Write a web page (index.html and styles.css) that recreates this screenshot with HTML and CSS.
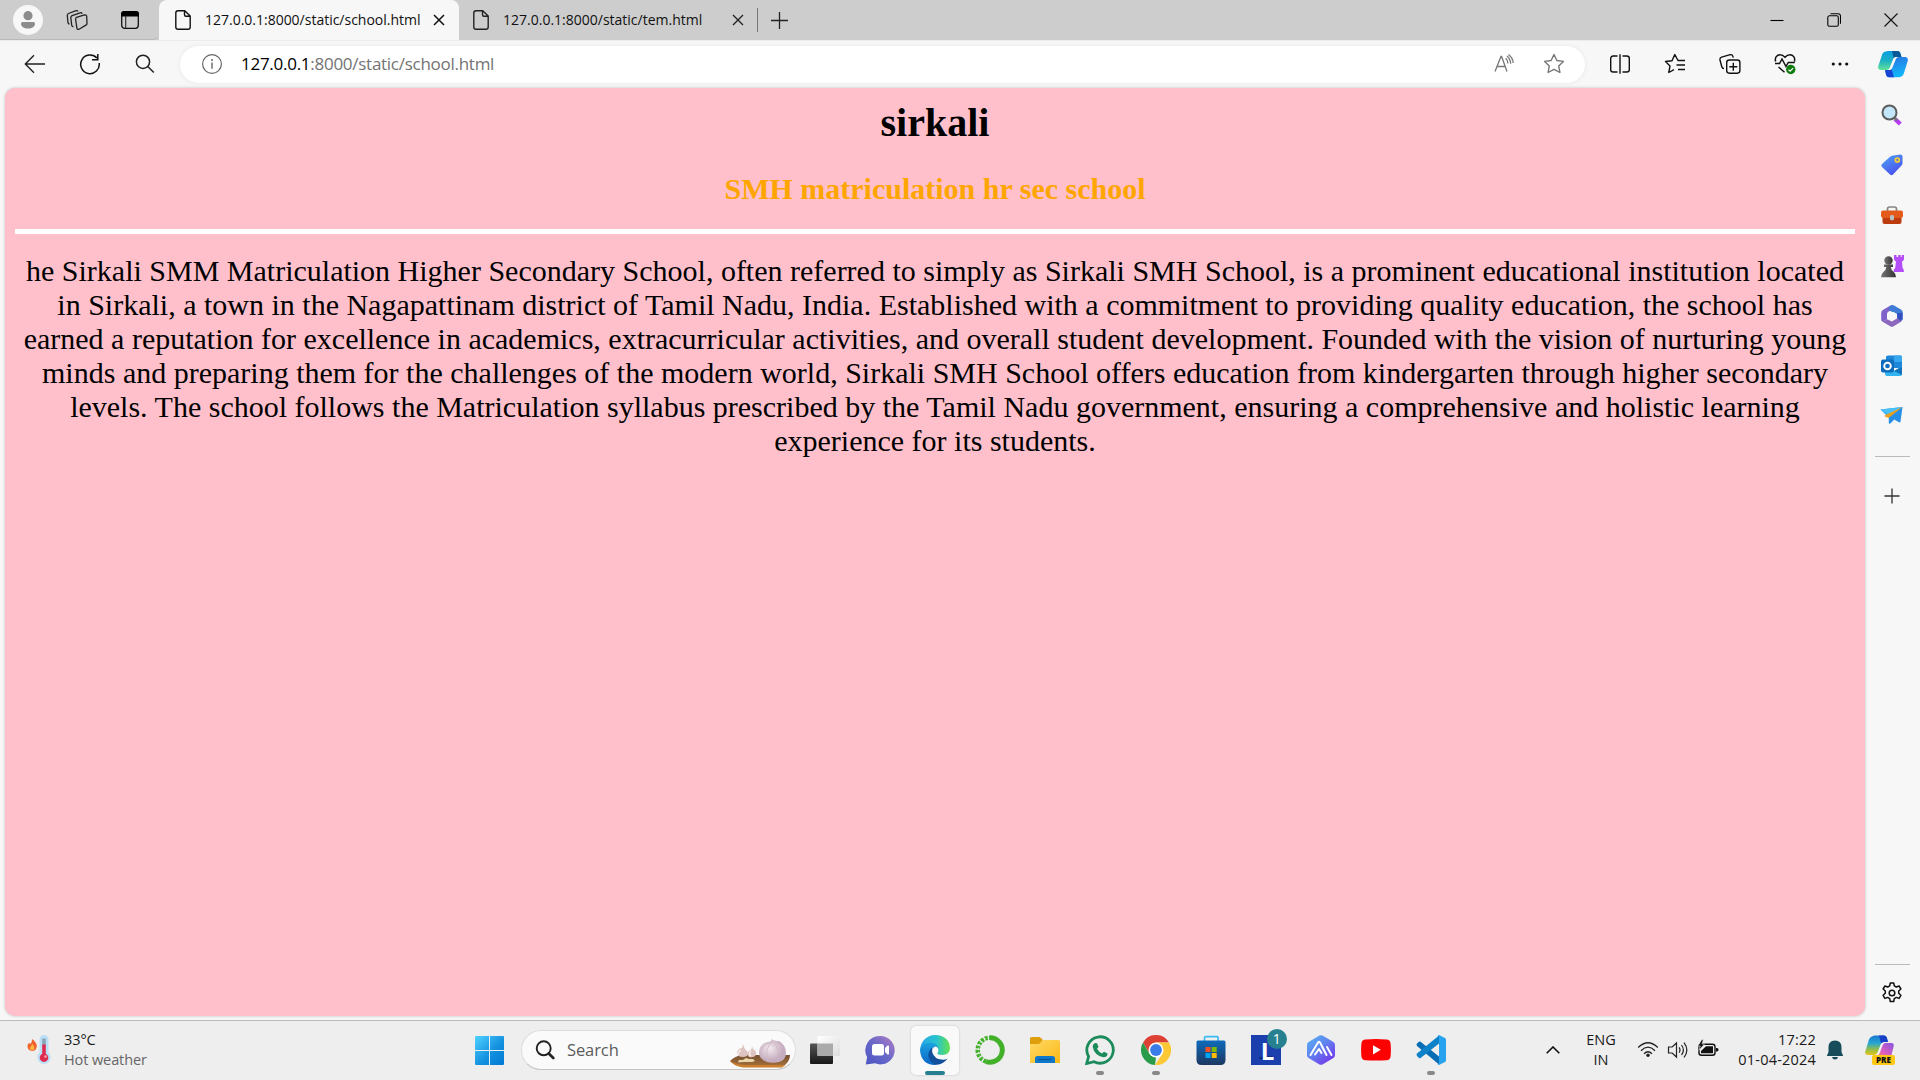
FILE: index.html
```html
<!DOCTYPE html>
<html lang="en">
<head>
<meta charset="utf-8">
<title>127.0.0.1:8000/static/school.html</title>
<link rel="stylesheet" href="styles.css">
</head>
<body>
<header class="tabbar">
  <div class="tab-tools">
    <svg class="i30" viewBox="0 0 30 30"><circle cx="15" cy="15" r="15" fill="#f7f7f7"/><circle cx="15" cy="10.7" r="4.6" fill="#8c8c8c"/><path d="M9.5 17h11q1.5 0 1.500 1.500c0 3.500-3 5-7 5s-7-1.500-7-5q0-1.500 1.500-1.500z" fill="#8c8c8c"/></svg>
    <svg class="i22 ws" viewBox="0 0 22 22" fill="none" stroke="#222" stroke-width="1.300"><path d="M10.500 8.300l8-2.300q1.800-.4 2.200 1.200l.3 7.300q0 1.200-1.200 1.700l-6.700 4q-2 .8-2.200-1l-1.300-8.700q0-1.700.9-2.200zM7.500 17.500q-1.500.3-1.800-1.300l-.9-7.500q0-1.600 1.300-2.100l8-2.800q1.500-.4 2.100 1M3.500 15q-1.300 0-1.500-1.300L1.300 6.600Q1.300 5 2.500 4.500l7.500-2.800q1.300-.4 2 .7"/></svg>
    <svg class="i20 tabact" viewBox="0 0 20 20"><rect x="1.700" y="1.700" width="16.600" height="16.600" rx="3" fill="none" stroke="#111" stroke-width="1.300"/><path d="M1 6.500V4q0-3 3-3h12q3 0 3 3v2.500z" fill="#000"/><path d="M5.700 6v12" stroke="#333" stroke-width="1.200"/></svg>
  </div>
  <div class="tab active">
    <svg class="doc" viewBox="0 0 16 20" fill="none" stroke="#111" stroke-width="1.400"><path d="M3 .8h6.700L15.200 6v11q0 2.200-2.200 2.200H3Q.8 19.200.8 17V3Q.8.800 3 .8zM9.500 1v3.800q0 1.500 1.500 1.500h4"/></svg>
    <span class="title t1">127.0.0.1:8000/static/school.html</span>
    <svg class="x" viewBox="0 0 12 12"><path d="M1 1l10 10M11 1L1 11" stroke="#111" stroke-width="1.500"/></svg>
  </div>
  <div class="tab second">
    <svg class="doc" viewBox="0 0 16 20" fill="none" stroke="#222" stroke-width="1.400"><path d="M3 .8h6.700L15.200 6v11q0 2.200-2.200 2.200H3Q.8 19.200.8 17V3Q.8.800 3 .8zM9.500 1v3.800q0 1.500 1.500 1.500h4"/></svg>
    <span class="title t2">127.0.0.1:8000/static/tem.html</span>
    <svg class="x" viewBox="0 0 12 12"><path d="M1 1l10 10M11 1L1 11" stroke="#222" stroke-width="1.400"/></svg>
  </div>
  <svg class="newtab" viewBox="0 0 17 17"><path d="M8.500 0v17M0 8.500h17" stroke="#222" stroke-width="1.300"/></svg>
  <div class="window-controls">
    <svg viewBox="0 0 14 14"><path d="M.5 7.500h13" stroke="#000" stroke-width="1.100"/></svg>
    <svg viewBox="0 0 14 14" fill="none" stroke="#000" stroke-width="1.100"><rect x=".8" y="2.800" width="10.500" height="10.500" rx="1.600"/><path d="M3.500.8h7.700q2.300 0 2.300 2.300v7.700"/></svg>
    <svg viewBox="0 0 14 14"><path d="M.5.500l13 13M13.500.500l-13 13" stroke="#111" stroke-width="1.100"/></svg>
  </div>
</header>

<nav class="toolbar">
  <div class="nav-buttons">
    <svg class="i22" viewBox="0 0 22 22" fill="none" stroke="#222" stroke-width="1.400"><path d="M21 11H1.500M10 2.200L1.300 11l8.700 8.800"/></svg>
    <svg class="i22" viewBox="0 0 22 22" fill="none" stroke="#111" stroke-width="1.500"><path d="M20.200 10a9.300 9.300 0 1 1-2.300-4.900M18.800 1v5.800H13"/></svg>
    <svg class="i22" viewBox="0 0 22 22" fill="none" stroke="#222" stroke-width="1.500"><circle cx="9" cy="8.800" r="6.600"/><path d="M13.800 13.500l6 6"/></svg>
  </div>
  <div class="address">
    <svg class="i22" viewBox="0 0 22 22" fill="none" stroke="#666" stroke-width="1.200"><circle cx="11" cy="11" r="9.400"/><path d="M11 9.500v6.200" stroke-width="1.400"/><circle cx="11" cy="6.900" r="1" fill="#666" stroke="none"/></svg>
    <span class="url"><b>127.0.0.1</b>:8000/static/school.html</span>
    <svg class="i22 read" viewBox="0 0 22 22" fill="none" stroke="#777" stroke-width="1.300"><path d="M2 18.500L8 3.500h.6L14 18.500M4 13.500h8.200M12.700 5.200q2.200 2 2.200 5.300M14 3q3.500 3 3.700 7.700M15.500 1.500q4.500 3.500 4.700 8.500"/></svg>
    <svg class="i22" viewBox="0 0 22 22" fill="none" stroke="#777" stroke-width="1.400" stroke-linejoin="round"><path d="M11 1.500l2.900 6 6.500.9-4.700 4.500 1.200 6.600-5.900-3.200-5.900 3.200 1.200-6.600L1.600 8.400l6.500-.9z"/></svg>
  </div>
  <div class="actions">
    <svg class="i22" viewBox="0 0 22 22" fill="none" stroke="#111" stroke-width="1.400"><path d="M8.500 3H4.300Q1.700 3 1.700 5.600v10.800Q1.700 19 4.300 19h4.200M13.500 3h4.200q2.600 0 2.600 2.600v10.800q0 2.600-2.600 2.600h-4.200M11 1.300v19.400"/></svg>
    <svg class="i22" viewBox="0 0 22 22" fill="none" stroke="#111" stroke-width="1.400" stroke-linejoin="round"><path d="M17 7.500h-3L10.800 1.500 8 7.700l-6.500.8L6 12.900l-1.200 6.600 5.200-2.800M13.500 7.500H21M12.500 12h8.500M14 16.500h7"/></svg>
    <svg class="i22" viewBox="0 0 22 22" fill="none" stroke="#111" stroke-width="1.400"><rect x="7.700" y="7" width="13.200" height="13.200" rx="2.600"/><path d="M14.300 9.700v8M10.300 13.700h8M5 15.500q-1.700 0-2.200-1.800L1 7q-.4-2.200 1.600-2.800l8.600-2.500q2-.5 2.600 1.400l.5 1.500"/></svg>
    <svg class="i22" viewBox="0 0 22 22" fill="none" stroke="#111" stroke-width="1.500"><path d="M1.600 8.500C.5 4.500 3 1.800 6 1.800q2.800 0 5 2.400Q13.200 1.800 16 1.800c3 0 5.500 2.700 4.400 6.700M1 10.500h4.500L8 6l4 7.500 2.300-4h6.500M4.500 14l6 5.200"/><circle cx="16.800" cy="16.500" r="4.700" fill="#107c10" stroke="none"/><path d="M14.500 16.600l1.600 1.500 3-3" stroke="#fff" stroke-width="1.200"/></svg>
    <svg class="i22" viewBox="0 0 22 22" fill="#111"><circle cx="4.300" cy="11" r="1.600"/><circle cx="11" cy="11" r="1.600"/><circle cx="17.700" cy="11" r="1.600"/></svg>
  </div>
  <svg class="copilot" viewBox="0 0 30 28"><defs>
    <linearGradient id="ca" x1="0" y1="0" x2="0" y2="1"><stop offset="0" stop-color="#0a9de0"/><stop offset=".5" stop-color="#1cb0c4"/><stop offset="1" stop-color="#62e39a"/></linearGradient>
    <linearGradient id="cb" x1="0" y1="0" x2=".3" y2="1"><stop offset="0" stop-color="#2a6fe0"/><stop offset="1" stop-color="#12b5fa"/></linearGradient></defs>
    <path d="M8 1.500Q9 1 10 1h9.500q2 0 2.800 2l1.200 4H18q-2 0-2.800 2l-3.400 9q-.8 2-2.800 2H3q-3.500 0-2.700-4L4 5q1-3.200 4-3.500z" fill="url(#ca)"/>
    <path d="M14 1h5.500q2 0 2.800 2l1.200 4H18q-1.500 0-2.300 1.300z" fill="#0a5896"/>
    <path d="M22 27Q21 27.300 20 27.300h-9q-2 0-2.800-2L7 20h4q2 0 2.800-2l3.600-9q.8-2 2.800-2H27q3.500 0 2.700 4L26 23q-1 3.500-4 4z" fill="url(#cb)"/><path d="M7 20h4q1.600 0 2.400-1.200L16 27.300h-5q-2 0-2.800-2z" fill="#1846d2"/><path d="M15.500 9q.7-2 2.700-2h2.500q-2 0-2.800 2l-3.700 9q-.8 2-2.700 2H9q2 0 2.800-2z" fill="#f7f7f7"/></svg>
</nav>

<div class="workspace">
  <main class="page">
    <h1>sirkali</h1>
    <h2>SMH matriculation hr sec school</h2>
    <hr>
    <p>he Sirkali SMM Matriculation Higher Secondary School, often referred to simply as Sirkali SMH School, is a prominent educational institution located in Sirkali, a town in the Nagapattinam district of Tamil Nadu, India. Established with a commitment to providing quality education, the school has earned a reputation for excellence in academics, extracurricular activities, and overall student development. Founded with the vision of nurturing young minds and preparing them for the challenges of the modern world, Sirkali SMH School offers education from kindergarten through higher secondary levels. The school follows the Matriculation syllabus prescribed by the Tamil Nadu government, ensuring a comprehensive and holistic learning experience for its students.</p>
  </main>
  <aside class="sidebar">
    <div class="apps">
      <svg viewBox="0 0 24 24"><path d="M15 16l5.300 5" stroke="#b43cf5" stroke-width="4.200"/><path d="M14 14.500l3 2.700" stroke="#777" stroke-width="2.500"/><circle cx="9.500" cy="9.500" r="7" fill="#c3e6fb" stroke="#5c5c5c" stroke-width="2"/></svg>
      <svg viewBox="0 0 24 24"><defs><linearGradient id="tg" x1="0" y1="0" x2=".6" y2="1"><stop offset="0" stop-color="#4fa8f4"/><stop offset="1" stop-color="#4a50ee"/></linearGradient></defs><path d="M13 2.500L20.500 1.500q2 0 2 2V10q0 1.500-1 2.500l-8.500 9q-1.500 1.500-3 0l-8-7.500q-1.500-1.500 0-3l8-7.300q1.300-1 3-1.200z" fill="url(#tg)"/><circle cx="17.300" cy="7" r="2" fill="#6d78d4" stroke="#f7cf2f" stroke-width="1.700"/></svg>
      <svg viewBox="0 -1 24 24"><path d="M7.500 8V5q0-2 2-2h5q2 0 2 2v3" fill="none" stroke="#858585" stroke-width="1.700"/><path d="M2.500 12h19v6q0 2-2 2h-15q-2 0-2-2z" fill="#bd3b0d"/><path d="M3 6.500h18q2 0 2 2v3q0 2.500-3 2.500H4q-3 0-3-2.500v-3q0-2 2-2z" fill="#e35a1c"/><rect x="10" y="11" width="4" height="5.200" rx="1.500" fill="#b8c1c7"/></svg>
      <svg viewBox="0 0 24 24"><defs><linearGradient id="gg"><stop offset="0" stop-color="#777"/><stop offset="1" stop-color="#333"/></linearGradient></defs><path d="M14 1h2.500v2h1.700V1h2.500v2h1V1H24v4q0 1.500-2 2.500l.6 6.500q1.400 1 1.400 4H13.500q0-3 1.700-4l.8-6.500q-2-1-2-2.500z" fill="#b44dfa"/><circle cx="8.500" cy="6.500" r="4.200" fill="url(#gg)"/><path d="M4 10.500h9v2.500h-2.300q.5 3.500 3.300 5.200 2 1.800 2 5H1q0-3.200 2.200-5Q6 16.500 6.300 13H4z" fill="url(#gg)"/></svg>
      <svg viewBox="0 0 24 24"><path d="M11 1.200L2.800 6Q1.200 7 1.200 9v6.500q0 2 2 1.700L7 15.500V10q0-1.500 1.300-2.200l5-3V2q-.6-1.500-2.300-.8z" fill="#7e62c9"/><path d="M12.500 1q1 .3 2 .8L21 5.500q1.700 1 1.700 3V15q0 1-1 1.700l-4.500-2.800V10L9 6.500V3q1.500-1.500 3.500-2z" fill="#407bd6"/><path d="M22 16q-.3 1.300-1.400 2l-7 4.300q-1.700 1-3.400 0L3 18q-1.300-1-1.700-2 1.500 1.500 3.500.5L7 15.200l5 2.300 5.200-3.300 4 2.300z" fill="#8c67bd"/><path d="M17 9.500l5.500-1V15l-2 2-3.300-2.800z" fill="#354fbf"/><circle cx="12.200" cy="12" r="4.100" fill="#f7f7f7"/></svg>
      <svg viewBox="0 0 24 24"><path d="M8 1.500h12.500q1.500 0 1.500 1.500v11H6V3q0-1.500 2-1.500z" fill="#1d86d8"/><path d="M14 1.500h6.500Q22 1.500 22 3v5h-8z" fill="#36a7ee"/><path d="M5 11.500l9 5.500 8-5v8q0 2-2 2H7q-2 0-2-2z" fill="#32b4f0"/><path d="M14 17l8-4.500V21z" fill="#1473bd"/><rect x="1" y="5.500" width="13" height="13" rx="2" fill="#0f6cbd"/><circle cx="7.500" cy="12" r="3.300" fill="none" stroke="#fff" stroke-width="1.900"/></svg>
      <svg viewBox="0 0 24 24"><path d="M.5 5.500L22.500 3l-2 14.500q-.5 1.500-2 .5l-4.200-2.500-4 4q-1.500.8-1.500-1v-5z" fill="#258ee8"/><path d="M.5 5.500L22.500 3 8 11z" fill="#49c2fb"/><path d="M22.500 3L5.500 11q-2 1.300 1 2.200l2.400.5z" fill="#eba01b"/></svg>
    </div>
    <div class="rule"></div>
    <svg class="add" viewBox="0 0 16 16"><path d="M8 .5v15M.5 8h15" stroke="#333" stroke-width="1.300"/></svg>
    <div class="rule bottom"></div>
    <svg class="gear" viewBox="0 0 24 24" fill="none" stroke="#111" stroke-width="1.500" stroke-linejoin="round"><circle cx="12" cy="12" r="2.800"/><path d="M10.300 2h3.400l.6 2.900 2 1.100 2.800-1 1.800 3-2.200 2v2.300l2.200 2-1.800 3.100-2.800-1-2 1.200-.6 2.900h-3.400l-.6-2.900-2-1.200-2.800 1-1.800-3.100 2.200-2V10L3.100 8l1.800-3 2.800 1 2-1.100z"/></svg>
  </aside>
</div>

<footer class="taskbar">
  <div class="weather">
    <svg viewBox="0 0 26 30"><path d="M5 4q5 3.500 4.800 7.500Q9 16 5 16 .5 15.500.5 11q0-2 1.700-3.200l.8 1.500Q5.500 7 5 4z" fill="#f0622d"/><path d="M5.300 9q2.500 2.500 2.200 4.300Q6.800 15.500 5 15.500 2.500 15 3 12.500z" fill="#ffb142"/><path d="M12.500 4.500a4.500 4.500 0 0 1 9 0v13a6.600 6.600 0 1 1-9 0z" fill="#bcdff8"/><path d="M15.200 3.500h3.600v7h-3.600z" fill="#8ba4b5"/><path d="M15.200 9.500h3.600v9.300a4.300 4.300 0 1 1-3.600 0z" fill="#dd2c50"/><circle cx="18.500" cy="21.500" r="1.300" fill="#ff9fae"/></svg>
    <div class="weather-text"><span>33°C</span><span class="muted">Hot weather</span></div>
  </div>
  <svg class="start" viewBox="0 0 29 29"><defs><linearGradient id="wg" x1="0" y1="0" x2="1" y2="1"><stop offset="0" stop-color="#4fd3ff"/><stop offset=".55" stop-color="#1592e0"/><stop offset="1" stop-color="#0078d4"/></linearGradient></defs><path d="M1 0h13v14H0V1q0-1 1-1zM15 0h13q1 0 1 1v13H15zM0 15h14v14H1q-1 0-1-1zM15 15h14v13q0 1-1 1H15z" fill="url(#wg)"/></svg>
  <div class="search">
    <svg class="search-icon" viewBox="0 0 20 20" fill="none" stroke="#222"><circle cx="8.700" cy="8.300" r="7" stroke-width="1.900"/><path d="M13.800 13.500l4.500 4.500" stroke-width="2.600" stroke-linecap="round"/></svg>
    <span>Search</span>
    <svg class="garlic" viewBox="0 0 62 30"><defs><linearGradient id="wd" x1="0" y1="0" x2="0" y2="1"><stop offset="0" stop-color="#755133"/><stop offset="1" stop-color="#a9713a"/></linearGradient><radialGradient id="gr" cx=".4" cy=".4"><stop offset="0" stop-color="#f2e9eb"/><stop offset="1" stop-color="#c6adc0"/></radialGradient></defs><path d="M1 23q5-5 12-6h48q0 6-6 11-2 1-6 1H15Q6 28 1 23z" fill="url(#wd)"/><path d="M1 23q8 4 17 4h38l-3 2.500H14Q5 28 1 23z" fill="#c97e30"/><path d="M43 1q2 2 7 2 7 4 7 12 0 7-7 9-6 1.500-12 0-8-3-8-9 0-9 8-11 4 0 5-3z" fill="url(#gr)"/><path d="M43 4q-8 7-4 20M44 4q8 7 4 20M43 4q-13 3-11 14" fill="none" stroke="#cdb6c7" stroke-width=".8"/><path d="M14 6q1 5 4 7 3 5-3 6-8 0-7-5 2-4 5-4zM23 8l1 3q4 2 3 6-2 3-7 2-3-3 0-6 3-1 3-5z" fill="#ddc4c0"/><path d="M12 12q-3 2-3 5M22 13q-3 3 0 5" stroke="#f7ede8" stroke-width="1.500" fill="none"/><path d="M10 22h4l3-2 3 1 4 0 2 2-3 1h-9l-5 .5z" fill="#ead5ad"/></svg>
  </div>
  <div class="pins">
    <div class="pin"><svg viewBox="0 0 30 30"><defs><linearGradient id="tv" x1="0" y1="0" x2="0" y2="1"><stop offset="0" stop-color="#555"/><stop offset="1" stop-color="#171717"/></linearGradient><linearGradient id="tw" x1="0" y1="0" x2="1" y2="1"><stop offset="0" stop-color="#fff"/><stop offset="1" stop-color="#ddd"/></linearGradient></defs><rect y="8.500" width="23" height="20.500" rx="1" fill="url(#tv)"/><rect x="7.500" y="1" width="22.500" height="20" rx="1" fill="url(#tw)"/><path d="M7.500 8.500H23V21H7.500z" fill="#aaa"/></svg></div>
    <div class="pin"><svg viewBox="0 0 30 30"><defs><linearGradient id="ch" x1="0" y1="1" x2="1" y2="0"><stop offset="0" stop-color="#4c55c4"/><stop offset=".5" stop-color="#6868c8"/><stop offset="1" stop-color="#b47dc4"/></linearGradient></defs><path d="M15 1a14.200 14.200 0 1 1-5 27.300L.8 29.500l1.300-7.500A14.200 14.200 0 0 1 15 1z" fill="url(#ch)"/><rect x="7" y="9" width="12" height="11.500" rx="2.500" fill="#fff"/><path d="M20 13l2.500-2.500q1.500-.5 1.500 1v7q0 1.500-1.500 1L20 17z" fill="#fff"/></svg></div>
    <div class="pin focused"><svg viewBox="0 0 30 30"><defs><linearGradient id="ea"><stop offset="0" stop-color="#24a5e6"/><stop offset=".55" stop-color="#29c3cf"/><stop offset="1" stop-color="#65e24c"/></linearGradient><linearGradient id="eb" x1="0" y1="0" x2="0" y2="1"><stop offset="0" stop-color="#1ca1df"/><stop offset="1" stop-color="#0c67c7"/></linearGradient></defs><path d="M.3 13A15 15 0 0 1 15 0q14.500.500 15 13.500-.5 6-7.500 6.500-4 0-5.300-1.600 1-1.200 1.300-3.400-.8-5-7.500-5.500Q3.500 9.500.3 13z" fill="url(#ea)"/><path d="M.2 13Q4 7 11 7.700q7 1 7.500 6.300-1-2.500-3.500-2.400-6 3.400-5.500 9Q10 27 17 29.800 2 31 0 16z" fill="url(#eb)"/><path d="M11.500 13q-4 4-3 9 2 7 8.500 7.800 6-.3 10.500-6-3 1.200-6 .7-7-.5-9.200-7-.5-2.500.2-4.500z" fill="#11509d"/></svg></div>
    <div class="pin"><svg viewBox="0 0 30 30" fill="none" stroke="#43b02a"><path d="M15 2.700a12.300 12.300 0 1 1-3.800 24" stroke-width="5"/><path d="M11.200 26.700A12.300 12.300 0 0 1 15 2.700" stroke-width="4.500" stroke-dasharray="3 1.200"/><path d="M9 25A12 12 0 0 1 13.500 3" stroke="#eee" stroke-width="1" stroke-dasharray="2 2"/></svg></div>
    <div class="pin"><svg viewBox="0 0 30 30"><defs><linearGradient id="fo" x1="0" y1="0" x2="1" y2="1"><stop offset="0" stop-color="#ffd966"/><stop offset="1" stop-color="#fbb916"/></linearGradient></defs><path d="M0 10V3.500Q0 2 1.500 2H9q1.500 0 2.500 1.500L13 5l-3 5z" fill="#dda00c"/><path d="M0 9h9l4-4h15.500Q30 5 30 6.500V28H0z" fill="url(#fo)"/><path d="M5 28v-4.500q0-2.500 2.500-2.500h15q2.500 0 2.500 2.500V28z" fill="#0f78c9"/><path d="M8.500 24.500h13" stroke="#07579b" stroke-width="1.200"/></svg></div>
    <div class="pin running"><svg viewBox="0 0 30 30"><path d="M1.700 28.500l1.900-7A13.200 13.200 0 1 1 9 26.700z" fill="none" stroke="#1c8b5b" stroke-width="2.800"/><path d="M10 8l2 .2 1.500 3.600-1.500 2q2 3.400 5 4.700l2-1.700 3.500 1.800q.3 3.700-4.200 3.700Q9.500 20.500 7.700 12q-.2-3 2.300-4z" fill="#1c8b5b"/></svg></div>
    <div class="pin running"><svg viewBox="0 0 30 30"><path d="M2 7.500A15 15 0 0 1 28 7.500H15l-6.500 11z" fill="#dd4134"/><path d="M2 7.500l6.500 11.200L15 22.500 14 30A15 15 0 0 1 2 7.500z" fill="#2a9b48"/><path d="M28 7.500A15 15 0 0 1 14 30l7.500-11.300L15 7.500z" fill="#fcc934"/><circle cx="15" cy="15" r="7.500" fill="#fff"/><circle cx="15" cy="15" r="5.900" fill="#3a7de8"/></svg></div>
    <div class="pin"><svg viewBox="0 0 30 30"><defs><linearGradient id="st" x1="0" y1="0" x2="0" y2="1"><stop offset="0" stop-color="#0e6bbb"/><stop offset="1" stop-color="#1c3861"/></linearGradient></defs><path d="M8.500 7V3q0-1.300 1.300-1.300h11q1.300 0 1.300 1.300v4" fill="none" stroke="#38bdf2" stroke-width="1.700"/><path d="M2 5.500h26q1.500 0 1.500 1.500v18q0 5-5 5h-19q-5 0-5-5V7Q.5 5.500 2 5.500z" fill="url(#st)"/><path d="M9.500 12h5v5h-5z" fill="#f25022"/><path d="M15.700 12h5v5h-5z" fill="#7fba00"/><path d="M9.500 18h5v5h-5z" fill="#00a4ef"/><path d="M15.700 18h5v5h-5z" fill="#ffb900"/></svg></div>
    <div class="pin"><svg viewBox="0 0 30 30"><path d="M0 0h30v30H0z" fill="#1c3fae"/><path d="M8.500 22V24h10l3-3z" fill="#102b70"/></svg><span class="letter">L</span><span class="badge">1</span></div>
    <div class="pin"><svg viewBox="0 0 30 30"><defs><linearGradient id="hx" x1="0" y1="0" x2=".8" y2="1"><stop offset="0" stop-color="#57b5f4"/><stop offset=".5" stop-color="#6080ef"/><stop offset="1" stop-color="#7433eb"/></linearGradient></defs><path d="M13.500.600q1.500-.8 3 0L27 6.700q2 1 2 3v10.500q0 2-2 3l-10.500 6.200q-1.500.8-3 0L3 23.200q-2-1-2-3V9.700q0-2 2-3z" fill="url(#hx)"/><path d="M4.500 20L12 7.500q1-1.500 2 0L20.500 20M9 19.500l4-5.500 2.500 4M21 12l4.500 8" fill="none" stroke="#fff" stroke-width="2" stroke-linecap="round" stroke-linejoin="round"/></svg></div>
    <div class="pin"><svg viewBox="0 0 30 30"><path d="M4.500 4.500q10.500-.8 21 0Q29 4.700 29.500 8q.8 7 0 14-.5 3-4 3.200-10.500.6-21 0Q1 25 .5 22q-.8-7 0-14Q1 4.700 4.500 4.500z" fill="#f00"/><path d="M12 10.200l7.800 4.600-7.800 4.600z" fill="#fff"/></svg></div>
    <div class="pin running"><svg viewBox="0 0 30 30"><path d="M1 8.500l2-1.700q.8-.5 1.600 0L23 21.500v8L1 11q-1-1.200 0-2.500z" fill="#086db5"/><path d="M1 21l2 1.900q.8.500 1.600 0L23 8.500V.5L1 18.600q-1 1.200 0 2.400z" fill="#0d82c9"/><path d="M21.500.3q1-.4 2 0L29 3q1 .5 1 1.700v20.600q0 1.200-1 1.700l-5.500 2.700q-1 .4-2 0 1.500 0 1.500-1.700V2q0-1.500-1.500-1.700z" fill="#27a3ef"/></svg></div>
  </div>
  <div class="tray">
    <svg class="chev" viewBox="0 0 14 8"><path d="M.7 7.300L7 1l6.300 6.300" fill="none" stroke="#111" stroke-width="1.600"/></svg>
    <div class="lang"><span>ENG</span><span>IN</span></div>
    <svg class="i22 wifi" viewBox="0 0 22 22" fill="none" stroke="#222" stroke-width="1.300"><path d="M1.200 8.500q9.800-9.500 19.600 0M4 11.700q7-7 14 0M7 14.700q4-4 8 0"/><circle cx="11" cy="16.300" r="1.700" fill="#222" stroke="none"/></svg>
    <svg class="i22 sound" viewBox="0 0 22 22" fill="none" stroke="#222" stroke-width="1.200"><path d="M1.500 8h3.700L9.500 4v14l-4.300-4H1.500zM12 8.300q2 2.700 0 5.400M14.500 6q3.800 5 0 10M17 3.600q5.700 7.400 0 14.800"/></svg>
    <svg class="i22 battery" viewBox="0 0 22 22"><rect x="2" y="5.200" width="16" height="11" rx="2.500" fill="none" stroke="#111" stroke-width="1.400"/><path d="M9 7.300h7v6.900H4V12z" fill="#111"/><path d="M19 9h1q1.500 0 1.500 1.700T20 12.500h-1z" fill="#111"/><path d="M4.700.8L1 7h2.300L2 11.300 7.500 5H5l1.300-4.200z" fill="#111" stroke="#eee" stroke-width=".5"/></svg>
    <div class="clock"><span>17:22</span><span>01-04-2024</span></div>
    <svg class="bell" viewBox="0 0 18 20"><path d="M9 .5q6.500.3 6.500 6.500v5L17 15.500V16H1v-.5L2.500 12V7Q2.500.8 9 .5z" fill="#174d5b"/><path d="M6 17h6q-.5 2.500-3 2.500T6 17z" fill="#174d5b"/></svg>
    <div class="pre"><svg viewBox="0 0 30 30"><defs><linearGradient id="pa" x1="0" y1="0" x2="0" y2="1"><stop offset="0" stop-color="#1677d3"/><stop offset=".4" stop-color="#28a7d1"/><stop offset=".7" stop-color="#8ebd4e"/><stop offset="1" stop-color="#e7c31b"/></linearGradient><linearGradient id="pb" x1="1" y1="0" x2="0" y2="1"><stop offset="0" stop-color="#8753df"/><stop offset=".6" stop-color="#dc5fc0"/><stop offset="1" stop-color="#f18b59"/></linearGradient></defs><path d="M8 1Q9 .5 10 .5h9q2 0 2.800 2L23 7h-4q-2 0-3 2l-3.500 9q-1 2-3 2H3q-3.500 0-2.600-4L4 4.500Q5 1.500 8 1z" fill="url(#pa)"/><path d="M14 .5h5q2 0 2.800 2L23 7h-4q-2 0-3 1.500z" fill="#183fc8"/><path d="M20 8h6.500q2.500 0 2.200 3L26 22H10q2 0 3-2l4-10q1-2 3-2z" fill="url(#pb)"/><path d="M16 9q1-1.500 3-1.500h2q-2 0-3 2l-3.500 9q-.7 1.500-2 1.500h-3q2 0 3-2z" fill="#f5f0f5"/></svg><span>PRE</span></div>
  </div>
</footer>
</body>
</html>
```
FILE: styles.css
```css
* { box-sizing: border-box; }
body {
  margin: 0;
  width: 1920px;
  height: 1080px;
  overflow: hidden;
  display: flex;
  flex-direction: column;
  background: #f7f7f7;
  color: #1a1a1a;
  font: 15px/20px "Open Sans", "Noto Sans", sans-serif;
}
svg { display: block; flex: none; }
.i20 { width: 20px; height: 20px; }
.i22 { width: 22px; height: 22px; }
.i30 { width: 30px; height: 30px; }

/* tab strip */
.tabbar { height: 40px; flex: none; display: flex; align-items: center; background: #cdcdcd; }
.tab-tools {
  width: 159px; height: 40px; padding-left: 13px;
  display: flex; align-items: center;
  border-bottom: 1px solid #b9b9b9; border-bottom-right-radius: 6px;
}
.ws { margin-left: 23px; }
.tabact { margin-left: 32px; }
.tab { height: 40px; display: flex; align-items: center; }
.active { width: 300px; padding-left: 16px; background: #f7f7f7; border-radius: 8px 8px 0 0; }
.second { width: 299px; height: 24px; padding-left: 14px; border-right: 1px solid #777; }
.doc { width: 16px; height: 20px; }
.title { margin-left: 14px; white-space: nowrap; color: #111; font-size: 14px; }
.t1 { width: 228px; letter-spacing: -0.010px; }
.t2 { width: 229px; letter-spacing: 0; }
.x { width: 12px; height: 12px; }
.newtab { width: 17px; height: 17px; margin-left: 13px; }
.window-controls { margin-left: auto; padding-right: 22px; display: flex; gap: 43px; }
.window-controls svg { width: 14px; height: 14px; }

/* toolbar */
.toolbar { height: 48px; flex: none; display: flex; align-items: center; border-top: 1px solid #ececec; padding-bottom: 1px; }
.nav-buttons { width: 180px; padding-left: 24px; display: flex; gap: 33px; }
.address {
  width: 1405px; height: 37px; padding: 0 20px 0 21px;
  display: flex; align-items: center;
  background: #fff; border-radius: 19px; box-shadow: 0 0 4px #e6e6e6;
}
.url { margin-left: 18px; font-size: 17px; letter-spacing: -0.270px; color: #737373; white-space: nowrap; }
.url b { font-weight: 400; color: #000; }
.read { margin-left: auto; margin-right: 28px; }
.actions { margin-left: 24px; display: flex; gap: 33px; }
.copilot { width: 30px; height: 28px; margin-left: 27px; }

/* page and side panel */
.workspace { flex: 1; min-height: 0; display: flex; padding: 0 0 4px 5px; }
.page {
  width: 1860px; padding: 12px 10px 10px;
  background: #ffc0cb; border-radius: 10px; box-shadow: 0 0 3px #bbb;
  text-align: center; color: #000;
  font-family: "Liberation Serif", "Times New Roman", serif;
}
.page h1 { margin: 0; font-size: 40px; line-height: 46px; }
.page h2 { margin: 26px 0 23px; font-size: 30px; line-height: 34px; color: orange; }
.page hr { height: 5px; margin: 0; border: 0; background: #fff; }
.page p { margin: 20px 0 0; font-size: 30px; line-height: 34px; }
.sidebar { width: 54px; display: flex; flex-direction: column; align-items: center; padding-top: 15px; }
.apps { display: flex; flex-direction: column; gap: 26.200px; }
.apps svg { width: 24px; height: 24px; }
.rule { width: 35px; height: 1px; flex: none; margin-top: 28px; background: #bbb; }
.add { width: 16px; height: 16px; margin-top: 31px; }
.bottom { margin-top: auto; }
.gear { width: 24px; height: 24px; margin: 16px 0 11px; }

/* taskbar */
.taskbar { height: 60px; flex: none; display: flex; align-items: center; background: #eee; border-top: 1px solid #bbb; padding-bottom: 1px; }
.weather { width: 475px; padding-left: 27px; display: flex; align-items: center; }
.weather svg { width: 26px; height: 30px; }
.weather-text { margin-left: 11px; display: flex; flex-direction: column; font-size: 14.500px; letter-spacing: -0.1px; }
.muted { color: #666; }
.start { width: 29px; height: 29px; }
.search {
  width: 275px; height: 40px; margin-left: 17px; padding: 0 4px 0 13px;
  display: flex; align-items: center;
  border: 1px solid #ddd; border-bottom-color: #c4c4c4; border-radius: 20px;
  background: #fafafa; color: #5c5c5c; font-size: 16.500px;
}
.search-icon { width: 20px; height: 20px; }
.search span { margin-left: 12px; letter-spacing: -0.1px; }
.garlic { width: 62px; height: 30px; margin-left: auto; margin-top: 5px; }
.pins { display: flex; gap: 7.100px; margin-left: 5px; }
.pin {
  position: relative; width: 48px; height: 49px; flex: none;
  display: flex; align-items: center; justify-content: center; border-radius: 5px;
}
.pin svg { width: 30px; height: 30px; }
.focused { background: #f9f9f9; box-shadow: 0 0 2px #bbb; }
.running::after, .focused::after {
  content: ""; position: absolute; bottom: 0; left: 20px;
  width: 8px; height: 4px; border-radius: 2px; background: #888;
}
.focused::after { left: 14px; width: 20px; background: #27808f; }
.letter { position: absolute; left: 19px; top: 12px; color: #fff; font: 700 24px/26px "Open Sans", sans-serif; }
.badge {
  position: absolute; left: 25px; top: 3px; width: 20px; height: 20px; border-radius: 50%;
  background: #27808f; color: #fff; text-align: center; font-size: 14px; line-height: 20px;
}
.tray { margin-left: auto; padding-right: 25px; display: flex; align-items: center; font-size: 14.500px; }
.chev { width: 14px; height: 8px; margin-right: 20px; }
.lang { width: 42px; display: flex; flex-direction: column; align-items: center; }
.wifi { margin-left: 15px; }
.sound { margin-left: 8px; }
.battery { margin-left: 8px; }
.clock { width: 97px; display: flex; flex-direction: column; align-items: flex-end; letter-spacing: 0.2px; }
.bell { width: 18px; height: 20px; margin-left: 10px; }
.pre { position: relative; margin-left: 21px; }
.pre svg { width: 30px; height: 30px; }
.pre span {
  position: absolute; left: 7px; bottom: 0; width: 23px; height: 10px; border-radius: 2px;
  background: #ffc814; color: #111; text-align: center; font: 800 8px/10px "Open Sans", sans-serif;
}
```
